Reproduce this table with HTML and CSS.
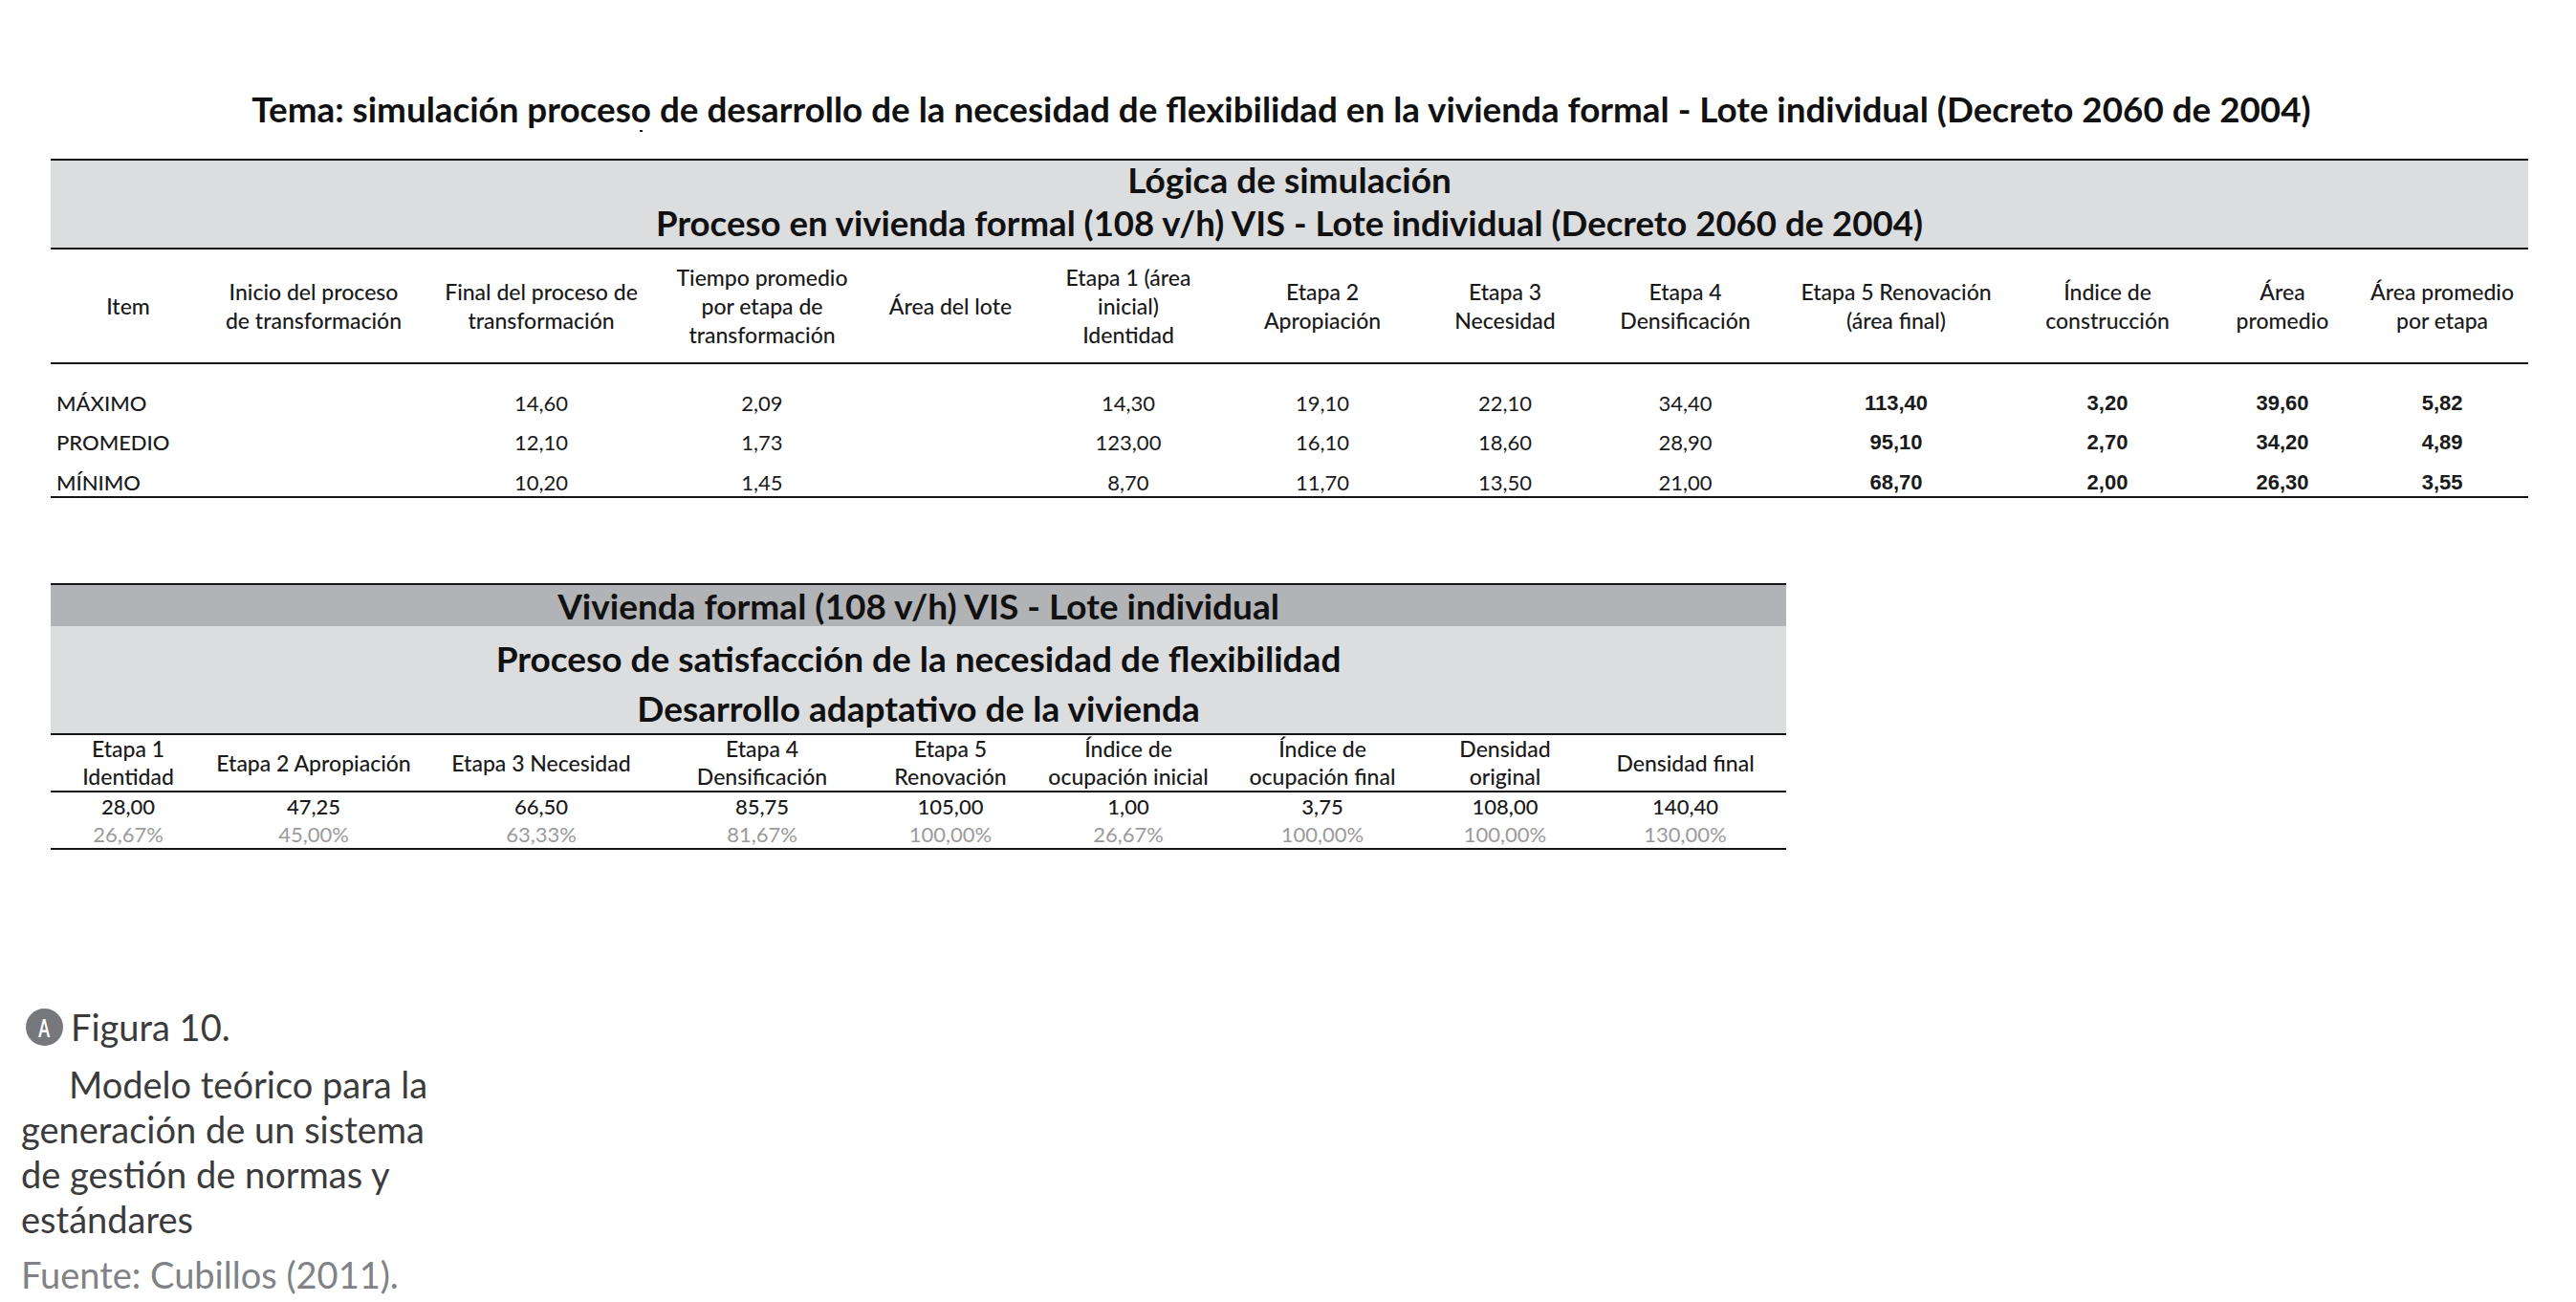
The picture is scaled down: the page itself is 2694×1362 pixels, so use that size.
FILE: index.html
```html
<!DOCTYPE html>
<html lang="es">
<head>
<meta charset="utf-8">
<title>Figura 10</title>
<link rel="stylesheet" href="styles.css">
</head>
<body>
<main class="page">
  <h1 class="title">Tema: simulación proces<span class="mark">o</span> de desarrollo de la necesidad de flexibilidad en la vivienda formal - Lote individual (Decreto 2060 de 2004)</h1>

  <table class="t1">
    <colgroup>
      <col style="width:162px"><col style="width:226px"><col style="width:250px"><col style="width:212px"><col style="width:182px"><col style="width:190px"><col style="width:216px"><col style="width:166px"><col style="width:211px"><col style="width:230px"><col style="width:212px"><col style="width:154px"><col style="width:180px">
    </colgroup>
    <thead>
      <tr class="band">
        <th colspan="13"><div class="l1">Lógica de simulación</div><div class="l2">Proceso en vivienda formal (108 v/h) VIS - Lote individual (Decreto 2060 de 2004)</div></th>
      </tr>
      <tr class="head">
        <th>Item</th>
        <th>Inicio del proceso<br>de transformación</th>
        <th>Final del proceso de<br>transformación</th>
        <th>Tiempo promedio<br>por etapa de<br>transformación</th>
        <th>Área del lote</th>
        <th>Etapa 1 (área<br>inicial)<br>Identidad</th>
        <th>Etapa 2<br>Apropiación</th>
        <th>Etapa 3<br>Necesidad</th>
        <th>Etapa 4<br>Densificación</th>
        <th>Etapa 5 Renovación<br>(área final)</th>
        <th>Índice de<br>construcción</th>
        <th>Área<br>promedio</th>
        <th>Área promedio<br>por etapa</th>
      </tr>
    </thead>
    <tbody>
      <tr class="r first">
        <td class="lbl">MÁXIMO</td><td></td><td>14,60</td><td>2,09</td><td></td><td>14,30</td><td>19,10</td><td>22,10</td><td>34,40</td><td class="b">113,40</td><td class="b">3,20</td><td class="b">39,60</td><td class="b">5,82</td>
      </tr>
      <tr class="r">
        <td class="lbl">PROMEDIO</td><td></td><td>12,10</td><td>1,73</td><td></td><td>123,00</td><td>16,10</td><td>18,60</td><td>28,90</td><td class="b">95,10</td><td class="b">2,70</td><td class="b">34,20</td><td class="b">4,89</td>
      </tr>
      <tr class="r last">
        <td class="lbl">MÍNIMO</td><td></td><td>10,20</td><td>1,45</td><td></td><td>8,70</td><td>11,70</td><td>13,50</td><td>21,00</td><td class="b">68,70</td><td class="b">2,00</td><td class="b">26,30</td><td class="b">3,55</td>
      </tr>
    </tbody>
  </table>

  <table class="t2">
    <colgroup>
      <col style="width:162px"><col style="width:226px"><col style="width:250px"><col style="width:212px"><col style="width:182px"><col style="width:190px"><col style="width:216px"><col style="width:166px"><col style="width:211px">
    </colgroup>
    <thead>
      <tr class="band-dark"><th colspan="9">Vivienda formal (108 v/h) VIS - Lote individual</th></tr>
      <tr class="band-light"><th colspan="9"><div>Proceso de satisfacción de la necesidad de flexibilidad</div><div>Desarrollo adaptativo de la vivienda</div></th></tr>
      <tr class="head2">
        <th>Etapa 1<br>Identidad</th>
        <th>Etapa 2 Apropiación</th>
        <th>Etapa 3 Necesidad</th>
        <th>Etapa 4<br>Densificación</th>
        <th>Etapa 5<br>Renovación</th>
        <th>Índice de<br>ocupación inicial</th>
        <th>Índice de<br>ocupación final</th>
        <th>Densidad<br>original</th>
        <th>Densidad final</th>
      </tr>
    </thead>
    <tbody>
      <tr class="vals">
        <td>28,00</td><td>47,25</td><td>66,50</td><td>85,75</td><td>105,00</td><td>1,00</td><td>3,75</td><td>108,00</td><td>140,40</td>
      </tr>
      <tr class="pcts">
        <td>26,67%</td><td>45,00%</td><td>63,33%</td><td>81,67%</td><td>100,00%</td><td>26,67%</td><td>100,00%</td><td>100,00%</td><td>130,00%</td>
      </tr>
    </tbody>
  </table>

  <figure class="caption">
    <div class="fig-head"><span class="badge"><span class="badge-letter">A</span></span><span>Figura 10.</span></div>
    <p class="desc">Modelo teórico para la<br>generación de un sistema<br>de gestión de normas y<br>estándares</p>
    <p class="source">Fuente: Cubillos (2011).</p>
  </figure>
</main>
</body>
</html>
```

FILE: styles.css
```css
html, body {
  margin: 0;
  background: #ffffff;
}

body {
  font-family: Lato, "Open Sans", "DejaVu Sans", sans-serif;
  color: #1d1d1b;
}

.page {
  padding-top: 90px;
  width: 2694px;
}

.title {
  margin: 0 0 0 53px;
  width: 2574px;
  font-size: 36.8px;
  line-height: 48px;
  font-weight: 700;
  text-align: center;
  color: #111;
}

.mark {
  position: relative;
}
.mark::after {
  content: "";
  position: absolute;
  left: 45%;
  bottom: -2px;
  width: 3px;
  height: 2px;
  background: #222;
}

table {
  border-collapse: separate;
  border-spacing: 0;
  table-layout: fixed;
}

th, td {
  padding: 0;
  text-align: center;
  white-space: nowrap;
}

/* ---------- table 1 ---------- */
.t1 {
  margin: 28px 0 0 53px;
  width: 2591px;
}

.band th {
  background: #dcdddf;
  border-top: 2px solid #151515;
  border-bottom: 2px solid #151515;
  font-size: 37px;
  font-weight: 700;
  color: #111;
  padding-bottom: 1px;
}
.band .l1 { line-height: 40px; }
.band .l2 { line-height: 50px; font-size: 36.6px; }

.head th {
  height: 118px;
  font-size: 23px;
  font-weight: 500;
  line-height: 30px;
  color: #1a1a1a;
  border-bottom: 2px solid #151515;
  vertical-align: middle;
}

.r td {
  font-size: 22px;
  line-height: 24px;
  padding-top: 17px;
  color: #1a1a1a;
  vertical-align: top;
}
.r.first td { padding-top: 29px; }
.r.last td {
  padding-top: 18px;
  padding-bottom: 2px;
  border-bottom: 2px solid #151515;
}
.r td.lbl {
  text-align: left;
  padding-left: 6px;
  font-weight: 500;
}
.r td.b {
  font-family: "Liberation Sans", Arial, sans-serif;
  font-weight: 700;
  font-size: 22px;
}

/* ---------- table 2 ---------- */
.t2 {
  margin: 89px 0 0 53px;
  width: 1815px;
}

.band-dark th {
  background: #b1b3b6;
  border-top: 2px solid #151515;
  height: 43px;
  line-height: 43px;
  font-size: 37px;
  font-weight: 700;
  color: #111;
}

.band-light th {
  background: #dcdddf;
  padding-top: 8px;
  line-height: 52px;
  font-size: 37px;
  font-weight: 700;
  color: #111;
  border-bottom: 2px solid #151515;
}

.head2 th {
  height: 58px;
  font-size: 23px;
  font-weight: 500;
  line-height: 29px;
  color: #1a1a1a;
  border-bottom: 2px solid #151515;
  vertical-align: middle;
}

.vals td {
  font-size: 22px;
  line-height: 29px;
  font-weight: 500;
  color: #1a1a1a;
}

.pcts td {
  font-size: 22px;
  line-height: 29px;
  color: #9b9b9b;
  border-bottom: 2px solid #151515;
}

/* ---------- caption ---------- */
.caption {
  margin: 162px 0 0 22px;
  font-family: Lato, "Open Sans", sans-serif;
  font-weight: 400;
  font-size: 38px;
}

.fig-head {
  display: flex;
  align-items: center;
  gap: 8px;
  margin-left: 5px;
  height: 47px;
  line-height: 47px;
  color: #3b3b3b;
}

.badge {
  flex: none;
  width: 39px;
  height: 39px;
  border-radius: 50%;
  background: #77787b;
  display: flex;
  align-items: center;
  justify-content: center;
}

.badge-letter {
  color: #fff;
  font-size: 26px;
  font-weight: 700;
  line-height: 1;
  transform: scaleX(0.65);
}

.desc {
  margin: 13px 0 0 0;
  text-indent: 50px;
  line-height: 47px;
  color: #3b3b3b;
}

.source {
  margin: 11px 0 0 0;
  line-height: 47px;
  color: #808285;
}
```
